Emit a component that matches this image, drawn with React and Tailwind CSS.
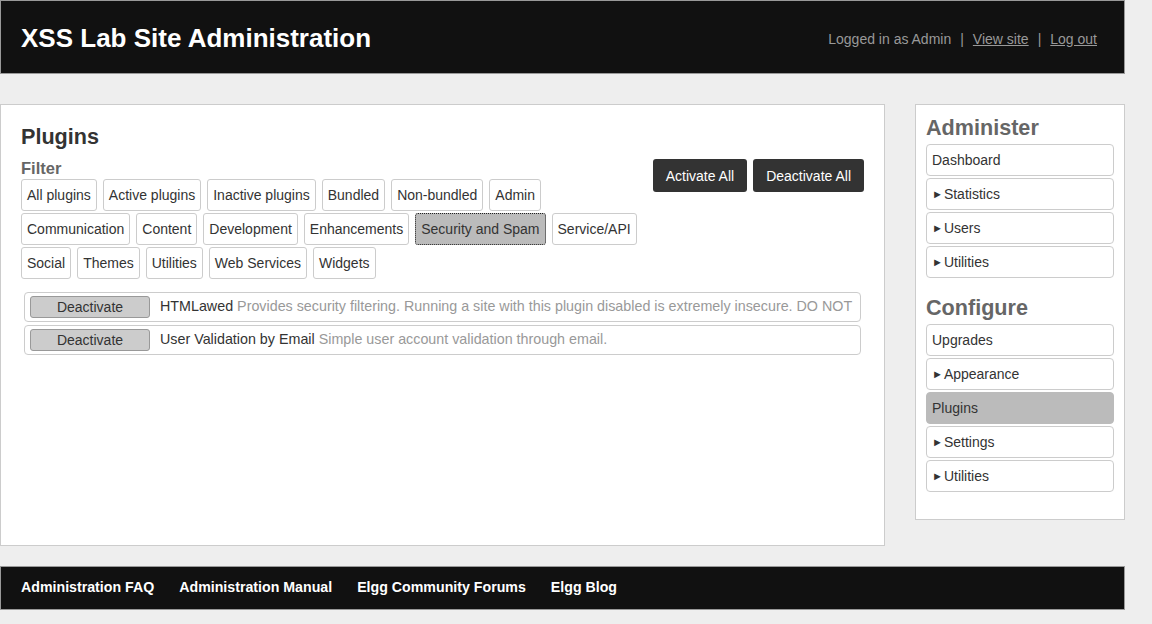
import { Fragment } from 'react'

const filterRows = [
  ['All plugins', 'Active plugins', 'Inactive plugins', 'Bundled', 'Non-bundled', 'Admin'],
  ['Communication', 'Content', 'Development', 'Enhancements', 'Security and Spam', 'Service/API'],
  ['Social', 'Themes', 'Utilities', 'Web Services', 'Widgets'],
]

const plugins = [
  {
    name: 'HTMLawed',
    desc: 'Provides security filtering. Running a site with this plugin disabled is extremely insecure. DO NOT DISABLE unless you know what you are doing.',
  },
  { name: 'User Validation by Email', desc: 'Simple user account validation through email.' },
]

const administer = [
  { label: 'Dashboard' },
  { label: 'Statistics', more: true },
  { label: 'Users', more: true },
  { label: 'Utilities', more: true },
]

const configure = [
  { label: 'Upgrades' },
  { label: 'Appearance', more: true },
  { label: 'Plugins', active: true },
  { label: 'Settings', more: true },
  { label: 'Utilities', more: true },
]

const footerLinks = ['Administration FAQ', 'Administration Manual', 'Elgg Community Forums', 'Elgg Blog']

function MenuItem({ label, more, active }) {
  return (
    <div
      className={`h-[32px] flex items-center px-[5px] border rounded-[4px] text-[14px] text-[#333] ${
        active ? 'bg-[#bbb] border-[#bbb]' : 'bg-white border-[#ccc]'
      }`}
    >
      {more && <span className="text-[11px] mr-[1px] mt-[1px]">&#9658;</span>}
      {label}
    </div>
  )
}

export default function App() {
  return (
    <div className="min-h-[624px] bg-[#eee] font-['Liberation_Sans',Arial,sans-serif] text-[#333]">
      <div className="w-[1125px]">
        <header className="h-[74px] bg-[#111] border border-[#999] flex items-center justify-between pl-[20px] pr-[27px]">
          <h1 className="text-[26px] font-bold text-white leading-none mt-[1px]">XSS Lab Site Administration</h1>
          <div className="text-[14px] text-[#999] mt-[4px]">
            Logged in as Admin
            <span className="mx-[9px]">|</span>
            <a className="underline">View site</a>
            <span className="mx-[9px]">|</span>
            <a className="underline">Log out</a>
          </div>
        </header>

        <div className="flex items-start justify-between mt-[30px]">
          <main className="w-[885px] min-h-[442px] bg-white border border-[#ccc] p-[20px]">
            <h2 className="text-[21.6px] font-bold leading-[24px] mb-[9px]">Plugins</h2>
            <div className="flex justify-between items-start">
              <div>
                <h3 className="text-[16.5px] font-bold text-[#666] leading-[21px]">Filter</h3>
                <div className="flex flex-col gap-[2px]">
                  {filterRows.map((row, i) => (
                    <div key={i} className="flex gap-[6px]">
                      {row.map((f) => (
                        <button
                          key={f}
                          className={`h-[32px] px-[5px] rounded-[3px] text-[14px] leading-[20px] text-[#333] ${
                            f === 'Security and Spam'
                              ? 'bg-[#bbb] border border-dotted border-[#222]'
                              : 'bg-white border border-[#ccc]'
                          }`}
                        >
                          {f}
                        </button>
                      ))}
                    </div>
                  ))}
                </div>
              </div>
              <div className="flex gap-[6px] mt-[1px]">
                <button className="h-[33px] px-[13px] pt-[1px] bg-[#333] text-white text-[14px] rounded-[3px]">Activate All</button>
                <button className="h-[33px] px-[13px] pt-[1px] bg-[#333] text-white text-[14px] rounded-[3px]">Deactivate All</button>
              </div>
            </div>

            <div className="mx-[3px] mt-[13px] flex flex-col gap-[3px]">
              {plugins.map((p) => (
                <div
                  key={p.name}
                  className="h-[30px] border border-[#ccc] rounded-[4px] flex items-center pl-[5px] pr-[4px]"
                >
                  <button className="shrink-0 w-[120px] h-[22px] bg-[#ccc] border border-[#999] rounded-[3px] text-[14px] text-[#333] leading-none">
                    Deactivate
                  </button>
                  <div className="ml-[10px] overflow-hidden whitespace-nowrap text-[14.3px]">
                    <span className="text-[#333]">{p.name}</span>
                    <span className="ml-[4px] text-[#999]">{p.desc}</span>
                  </div>
                </div>
              ))}
            </div>
          </main>

          <aside className="w-[210px] bg-white border border-[#ccc] pt-[10px] px-[10px] pb-[27px]">
            {[
              ['Administer', administer],
              ['Configure', configure],
            ].map(([title, items], i) => (
              <Fragment key={title}>
                <h2 className={`text-[21.6px] font-bold text-[#666] leading-[26px] mb-[3px] ${i ? 'mt-[17px]' : ''}`}>{title}</h2>
                <div className="flex flex-col gap-[2px]">
                  {items.map((it) => (
                    <MenuItem key={it.label} {...it} />
                  ))}
                </div>
              </Fragment>
            ))}
          </aside>
        </div>

        <footer className="mt-[20px] h-[44px] bg-[#111] border border-[#999] flex items-center gap-[25px] px-[20px]">
          {footerLinks.map((l) => (
            <a key={l} className="text-[14.2px] font-bold text-white">
              {l}
            </a>
          ))}
        </footer>
      </div>
    </div>
  )
}
